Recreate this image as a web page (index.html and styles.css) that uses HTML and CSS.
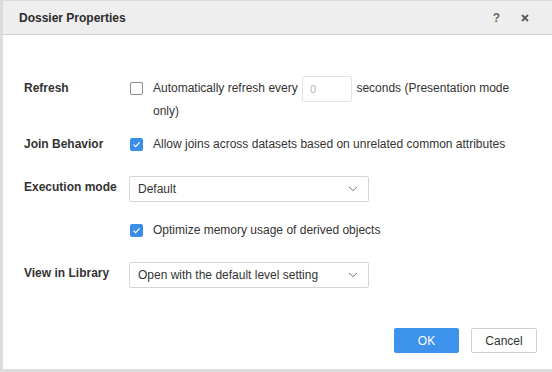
FILE: index.html
```html
<!DOCTYPE html>
<html lang="en">
<head>
  <meta charset="UTF-8">
  <title>Dossier Properties</title>
  <link rel="stylesheet" href="styles.css">
</head>
<body>
  <div class="dialog">
    <div class="dialog-header">
      <span class="dialog-title">Dossier Properties</span>
      <span class="help-btn">?</span>
      <span class="close-btn">
        <svg viewBox="0 0 8 8" width="8" height="8">
          <path d="M1 1L7 7M7 1L1 7" stroke="#5a5a5a" stroke-width="1.8"/>
        </svg>
      </span>
    </div>

    <div class="form">
      <div class="row row-refresh">
        <div class="label">Refresh</div>
        <div class="check-line">
          <span class="checkbox"></span>
          <div class="check-text">Automatically refresh every <input class="seconds" type="text" placeholder="0"> seconds (Presentation mode only)</div>
        </div>
      </div>

      <div class="row row-join">
        <div class="label">Join Behavior</div>
        <div class="check-line">
          <span class="checkbox checked">
            <svg viewBox="0 0 13 13" width="13" height="13"><path d="M3.5 6.6L5.6 8.6L9.6 4.4" fill="none" stroke="#fff" stroke-width="1.2"/></svg>
          </span>
          <div class="check-text">Allow joins across datasets based on unrelated common attributes</div>
        </div>
      </div>

      <div class="row row-exec">
        <div class="label">Execution mode</div>
        <div class="select">
          <span>Default</span>
          <svg viewBox="0 0 10 6" width="10" height="6"><path d="M1 1L5 4.6L9 1" fill="none" stroke="#777" stroke-width="1"/></svg>
        </div>
      </div>

      <div class="row row-opt">
        <div class="label"></div>
        <div class="check-line">
          <span class="checkbox checked">
            <svg viewBox="0 0 13 13" width="13" height="13"><path d="M3.5 6.6L5.6 8.6L9.6 4.4" fill="none" stroke="#fff" stroke-width="1.2"/></svg>
          </span>
          <div class="check-text">Optimize memory usage of derived objects</div>
        </div>
      </div>

      <div class="row row-view">
        <div class="label">View in Library</div>
        <div class="select">
          <span>Open with the default level setting</span>
          <svg viewBox="0 0 10 6" width="10" height="6"><path d="M1 1L5 4.6L9 1" fill="none" stroke="#777" stroke-width="1"/></svg>
        </div>
      </div>
    </div>

    <div class="dialog-footer">
      <button class="btn btn-primary">OK</button>
      <button class="btn">Cancel</button>
    </div>
  </div>
</body>
</html>
```

FILE: styles.css
```css
* {
  box-sizing: border-box;
  margin: 0;
  padding: 0;
}

body {
  background-color: #dcdcdc;
  font-family: 'Liberation Sans', Arial, sans-serif;
  font-size: 12px;
  color: #333;
  width: 552px;
  height: 372px;
  overflow: hidden;
}

.dialog {
  margin: 1px 0 0 3px;
  width: 549px;
  height: 368px;
  background-color: #fff;
  display: flex;
  flex-direction: column;
}

.dialog-header {
  height: 34px;
  background-color: #eeeeee;
  border-bottom: 1px solid #d0d0d0;
  display: flex;
  align-items: center;
  padding-left: 16px;
}

.dialog-title {
  flex: 1;
  font-size: 12px;
  font-weight: bold;
  color: #2b2b2b;
}

.help-btn {
  font-size: 12px;
  font-weight: bold;
  color: #666;
  margin-right: 21px;
}

.close-btn {
  display: flex;
  margin-right: 23px;
}

.form {
  padding: 42px 20px 0 21px;
}

.row {
  display: flex;
  align-items: flex-start;
}

.label {
  flex: none;
  width: 105px;
  font-weight: bold;
  line-height: 22px;
  color: #333;
}

.row-join {
  margin-top: 11px;
}

.row-exec {
  margin-top: 21px;
}

.row-opt {
  margin-top: 17px;
}

.row-view {
  margin-top: 21px;
}

.check-line {
  flex: 1;
  display: flex;
  align-items: flex-start;
  padding-left: 1px;
}

.checkbox {
  flex: none;
  width: 13px;
  height: 13px;
  margin-top: 5px;
  margin-right: 10px;
  border: 1px solid #8c8c8c;
  border-radius: 2px;
  display: flex;
}

.checkbox.checked {
  border: none;
  background-color: #3b8ee8;
}

.check-text {
  line-height: 22px;
  color: #333;
}

.seconds {
  width: 50px;
  height: 26px;
  margin: -2px 1px;
  padding-left: 7px;
  vertical-align: middle;
  border: 1px solid #e2e2e2;
  border-radius: 2px;
  font-family: 'Liberation Sans', Arial, sans-serif;
  font-size: 11px;
  outline: none;
}

.seconds::placeholder {
  color: #b5b5b5;
}

.select {
  width: 240px;
  height: 26px;
  border: 1px solid #d6d6d6;
  border-radius: 2px;
  display: flex;
  align-items: center;
  justify-content: space-between;
  padding: 0 10px 0 8px;
  color: #333;
}

.dialog-footer {
  margin-top: auto;
  display: flex;
  justify-content: flex-end;
  gap: 12px;
  padding: 0 15px 16px 0;
}

.btn {
  width: 66px;
  height: 25px;
  border: 1px solid #d0d0d0;
  border-radius: 2px;
  background-color: #fff;
  color: #333;
  font-family: 'Liberation Sans', Arial, sans-serif;
  font-size: 12px;
}

.btn-primary {
  width: 65px;
  border-color: #3d92eb;
  background-color: #3d92eb;
  color: #fff;
}
```
